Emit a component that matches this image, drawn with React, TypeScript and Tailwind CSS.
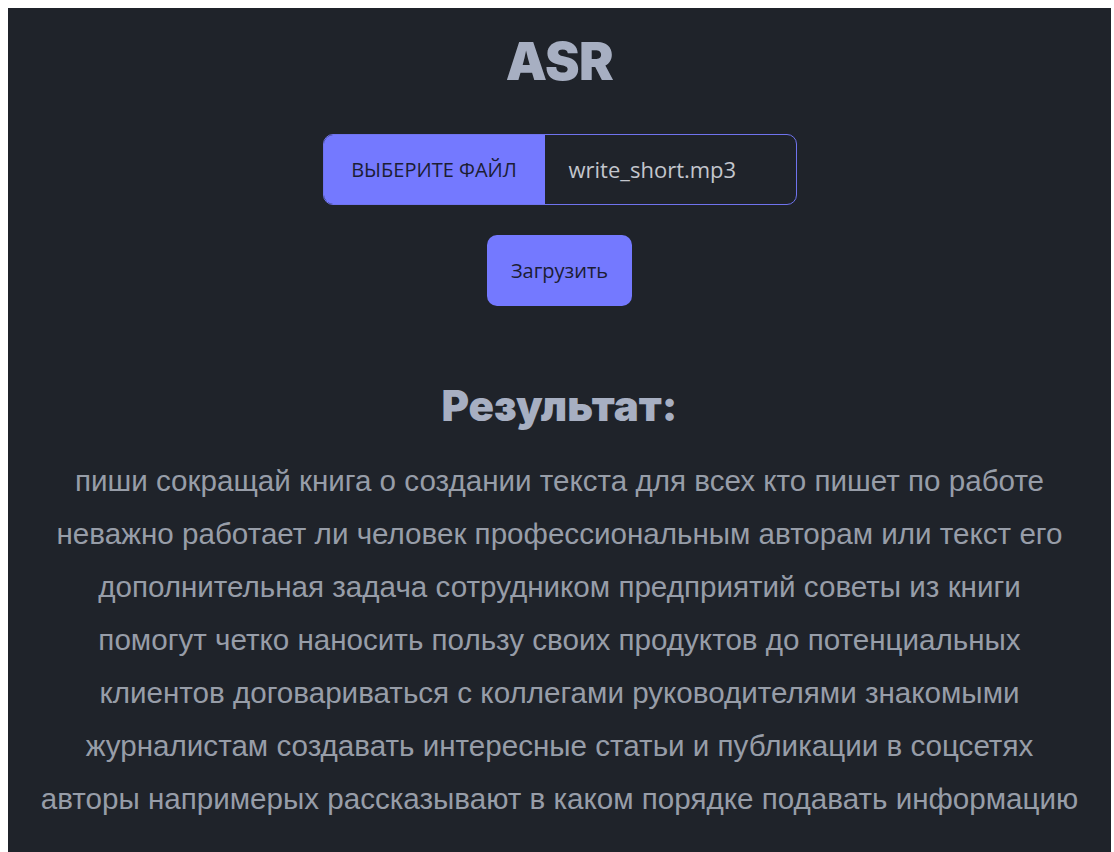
import { useState } from 'react'

// Распознанный текст, разбитый по строкам
const transcriptLines = [
  'пиши сокращай книга о создании текста для всех кто пишет по работе',
  'неважно работает ли человек профессиональным авторам или текст его',
  'дополнительная задача сотрудником предприятий советы из книги',
  'помогут четко наносить пользу своих продуктов до потенциальных',
  'клиентов договариваться с коллегами руководителями знакомыми',
  'журналистам создавать интересные статьи и публикации в соцсетях',
  'авторы напримерых рассказывают в каком порядке подавать информацию',
]

export default function App() {
  const [fileName] = useState('write_short.mp3')

  return (
    <div className="min-h-screen bg-white pt-2 pl-2 pr-[3px]">
      <div className="min-h-[900px] bg-[#1f232a] flex flex-col items-center pt-[22px] font-['Open_Sans',sans-serif]">
        {/* Заголовок */}
        <h1 className="text-[52px] leading-[64px] font-black text-[#a7afc2] font-['Inter',sans-serif] tracking-[-0.5px]">
          ASR
        </h1>

        {/* Выбор файла */}
        <div className="mt-[40px] flex w-[474px] h-[71px] rounded-[10px] border border-[#6f73ee] overflow-hidden">
          <label className="w-[221px] shrink-0 bg-[#7479ff] flex items-center justify-center text-[20px] font-medium text-[#1c1d35] cursor-pointer">
            ВЫБЕРИТЕ ФАЙЛ
          </label>
          <div className="flex-1 flex items-center pl-[24px] text-[22px] text-[#c3c6cd]">
            {fileName}
          </div>
        </div>

        {/* Кнопка загрузки */}
        <button className="mt-[30px] w-[145px] h-[71px] rounded-[10px] bg-[#7479ff] text-[20px] font-medium text-[#1c1d35]">
          Загрузить
        </button>

        {/* Результат распознавания */}
        <h2 className="mt-[75px] text-[42px] leading-[50px] font-black text-[#a7afc2] font-['Inter',sans-serif]">
          Результат:
        </h2>
        <div className="mt-[23px] text-center text-[29.6px] leading-[53px] text-[#979da8] font-['Liberation_Sans',Arial,sans-serif]">
          {transcriptLines.map((line) => (
            <p key={line}>{line}</p>
          ))}
        </div>
      </div>
    </div>
  )
}
